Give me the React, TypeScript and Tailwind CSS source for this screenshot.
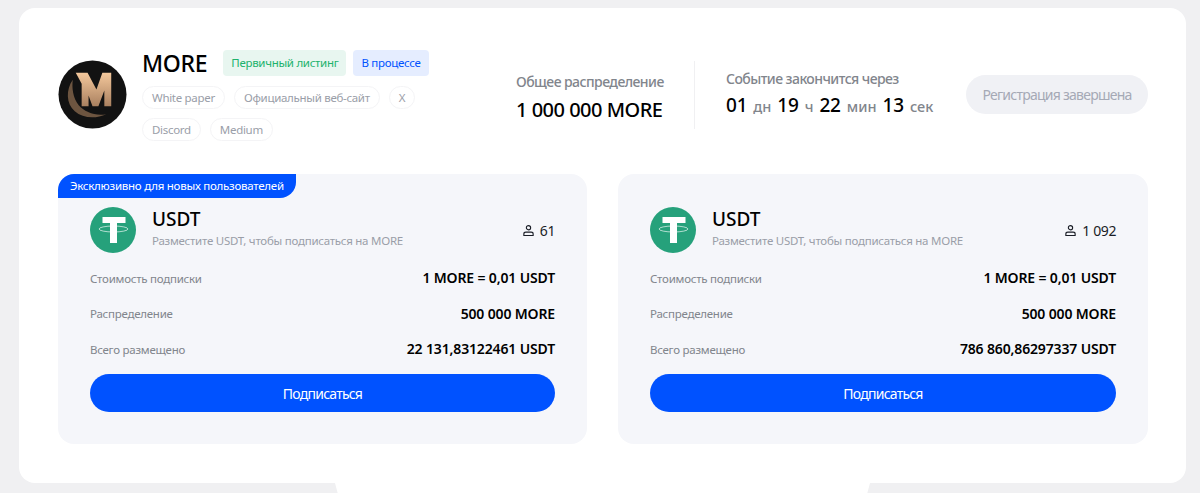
function MoreLogo() {
  return (
    <svg viewBox="0 0 70 70" className="h-[69px] w-[69px] shrink-0">
      <defs>
        <linearGradient id="moreGold" x1="0" y1="0" x2="0" y2="1">
          <stop offset="0" stopColor="#f4c89c" />
          <stop offset="1" stopColor="#a9805f" />
        </linearGradient>
      </defs>
      <circle cx="35" cy="35" r="34.500" fill="#121212" />
      <path d="M15 20C8 30 8 44 17 52c8 7 21 8 32 3-11 2-22-2-28-9-6-8-7-18-6-26z" fill="#6d5540" />
      <path d="M18 13h12l9 17 6-17h9v34h-7V31l-6 16h-6l-4-11v11h-7V24z" fill="url(#moreGold)" />
    </svg>
  );
}

function TetherIcon() {
  return (
    <svg viewBox="0 0 46 46" className="h-[46px] w-[46px] shrink-0">
      <circle cx="23" cy="23" r="23" fill="#26a17b" />
      <path d="M12.500 10h23v6h-8.500v20h-7V16h-7.500z" fill="#ffffff" />
      <ellipse cx="23.500" cy="22" rx="14.500" ry="3" fill="none" stroke="#ffffff" strokeWidth="0.800" opacity="0.8" />
    </svg>
  );
}

function UserIcon() {
  return (
    <svg viewBox="0 0 14 14" className="h-[13px] w-[13px]" fill="none" stroke="#1a1d26" strokeWidth="1.200">
      <circle cx="7" cy="4" r="2.300" />
      <path d="M2 12.400v-1.600c0-1.300 1-2 2.200-2h5.600c1.200 0 2.200.7 2.200 2v1.600z" />
    </svg>
  );
}

function Row({ label, value }: { label: string; value: string }) {
  return (
    <div className="flex h-[35.500px] items-center justify-between">
      <span className="pt-px text-[11.500px] tracking-[-0.250px] text-[#81858c]">{label}</span>
      <span className="text-[14px] font-semibold tracking-[-0.150px] text-black">{value}</span>
    </div>
  );
}

function PoolCard({ users, total, exclusive }: { users: string; total: string; exclusive?: boolean }) {
  return (
    <div className="relative rounded-2xl bg-[#f5f6fa] px-8 pt-[33px] pb-8">
      {exclusive && (
        <div className="absolute left-0 top-0 flex h-[24px] items-center rounded-tl-2xl rounded-br-2xl bg-[#0052ff] px-3 text-[11.500px] tracking-[-0.250px] text-white">
          Эксклюзивно для новых пользователей
        </div>
      )}
      <div className="flex items-center">
        <TetherIcon />
        <div className="ml-[16px] flex-1 pb-[4px]">
          <div className="text-[19px] font-medium leading-[25px] text-black">USDT</div>
          <div className="text-[11.500px] leading-[17px] tracking-[-0.250px] text-[#9a9ea8]">Разместите USDT, чтобы подписаться на MORE</div>
        </div>
        <div className="flex items-center gap-[5px] text-[14px] tracking-[-0.400px] text-[#1a1d26]">
          <UserIcon />
          {users}
        </div>
      </div>
      <div className="mt-[7px]">
        <Row label="Стоимость подписки" value="1 MORE = 0,01 USDT" />
        <Row label="Распределение" value="500 000 MORE" />
        <Row label="Всего размещено" value={total} />
      </div>
      <button className="mt-[7.500px] h-[38px] w-full rounded-full bg-[#0052ff] text-[14px] tracking-[-0.750px] text-white">Подписаться</button>
    </div>
  );
}

export default function App() {
  return (
    <div className="h-[493px] overflow-hidden bg-[#f0f0f2] pl-[19px] pr-[14px] pt-2 font-['Noto_Sans',sans-serif]">
      <div className="h-[475px] rounded-2xl bg-white pl-[39px] pr-[38px] pt-[42px]">
        {/* header */}
        <div className="flex h-[124px] items-start">
          <div className="mt-[10px]">
            <MoreLogo />
          </div>
          <div className="ml-[15px] w-[300px]">
            <div className="flex items-center gap-[7px]">
              <span className="mr-[9px] text-[23px] font-medium leading-[26px] tracking-[-0.300px] text-black">MORE</span>
              <span className="flex h-[26px] items-center whitespace-nowrap rounded bg-[#e8f6f0] px-2 text-[11.500px] tracking-[-0.300px] text-[#20b26c]">Первичный листинг</span>
              <span className="flex h-[26px] items-center whitespace-nowrap rounded bg-[#e5edff] px-2 text-[11.500px] tracking-[-0.300px] text-[#0052ff]">В процессе</span>
            </div>
            <div className="mt-[10px] flex flex-wrap gap-[9px]">
              {['White paper', 'Официальный веб-сайт', 'X', 'Discord', 'Medium'].map((link) => (
                <span key={link} className="flex h-[23px] items-center rounded-full border border-[#f4f4f6] px-[9px] text-[11.500px] tracking-[-0.300px] text-[#9a9ea8]">
                  {link}
                </span>
              ))}
            </div>
          </div>
          <div className="ml-[74px] mt-[22px] w-[147px]">
            <div className="whitespace-nowrap text-[14px] font-medium leading-[20px] tracking-[-0.550px] text-[#81858c]">Общее распределение</div>
            <div className="mt-[4px] whitespace-nowrap text-[20px] font-medium leading-[28px] tracking-[-0.500px] text-black">1 000 000 MORE</div>
          </div>
          <div className="ml-[31px] mt-[11px] h-[68px] w-px bg-[#f0f0f2]" />
          <div className="ml-[31px] mt-[19px] w-[240px]">
            <div className="whitespace-nowrap text-[14px] font-medium leading-[20px] tracking-[-0.550px] text-[#81858c]">Событие закончится через</div>
            <div className="mt-[2px] flex items-baseline gap-[6px] text-[14.500px] font-medium leading-[28px] text-[#81858c]">
              <span className="text-[19px] tracking-[-0.200px] text-black">01</span>дн
              <span className="text-[19px] tracking-[-0.200px] text-black">19</span>ч
              <span className="text-[19px] tracking-[-0.200px] text-black">22</span>мин
              <span className="text-[19px] tracking-[-0.200px] text-black">13</span>сек
            </div>
          </div>
          <button className="ml-auto mt-[25px] h-[39px] w-[182px] rounded-full bg-[#f0f1f5] text-[14px] tracking-[-0.750px] text-[#a5a9b5]">Регистрация завершена</button>
        </div>

        {/* pools */}
        <div className="grid grid-cols-[529px_530px] gap-[31px]">
          <PoolCard users="61" total="22 131,83122461 USDT" exclusive />
          <PoolCard users="1 092" total="786 860,86297337 USDT" />
        </div>
      </div>
      <div className="mx-auto h-[10px] w-[535px] bg-white [clip-path:polygon(0_0,100%_0,99.500%_100%,0.500%_100%)]" />
    </div>
  );
}
